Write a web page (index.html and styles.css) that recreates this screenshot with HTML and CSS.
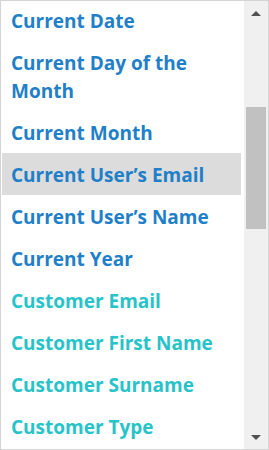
FILE: index.html
```html
<!DOCTYPE html>
<html lang="en">
<head>
    <meta charset="UTF-8">
    <meta name="viewport" content="width=device-width, initial-scale=1.0">
    <title>Field Picker</title>
    <link rel="stylesheet" href="styles.css">
</head>
<body>
    <div class="picker">
        <ul class="field-list">
            <li class="field system">Current Date</li>
            <li class="field system">Current Day of the Month</li>
            <li class="field system">Current Month</li>
            <li class="field system active">Current User’s Email</li>
            <li class="field system">Current User’s Name</li>
            <li class="field system">Current Year</li>
            <li class="field customer">Customer Email</li>
            <li class="field customer">Customer First Name</li>
            <li class="field customer">Customer Surname</li>
            <li class="field customer">Customer Type</li>
        </ul>
        <div class="scrollbar">
            <div class="arrow up"></div>
            <div class="track">
                <div class="thumb"></div>
            </div>
            <div class="arrow down"></div>
        </div>
    </div>
</body>
</html>
```

FILE: styles.css
```css
body {
    margin: 0;
    font-family: 'Open Sans', sans-serif;
    background-color: #ffffff;
}

.picker {
    width: 269px;
    height: 450px;
    box-sizing: border-box;
    border: 1px solid #d4d4d4;
    display: flex;
    overflow: hidden;
}

.field-list {
    list-style: none;
    margin: -2px 0 0 0;
    padding: 0 0 0 1px;
    flex: 1;
    overflow: hidden;
}

.field {
    font-size: 19px;
    font-weight: 700;
    line-height: 28px;
    padding: 8px 10px 6px 9px;
    width: 220px;
}

.field.system {
    color: #1f7fc8;
}

.field.customer {
    color: #27c3c9;
}

.field.active {
    background-color: #dcdcdc;
}

.scrollbar {
    width: 24px;
    background-color: #f0f0f0;
    display: flex;
    flex-direction: column;
    margin-left: 1px;
}

.arrow {
    height: 24px;
    display: flex;
    justify-content: center;
    align-items: center;
}

.arrow.up::after,
.arrow.down::after {
    content: "";
    width: 0;
    height: 0;
    border-left: 5px solid transparent;
    border-right: 5px solid transparent;
}

.arrow.up::after {
    border-bottom: 5px solid #505050;
}

.arrow.down::after {
    border-top: 5px solid #505050;
}

.track {
    flex: 1;
    padding: 82px 2px 0 2px;
}

.thumb {
    height: 122px;
    background-color: #c1c1c1;
}
```
